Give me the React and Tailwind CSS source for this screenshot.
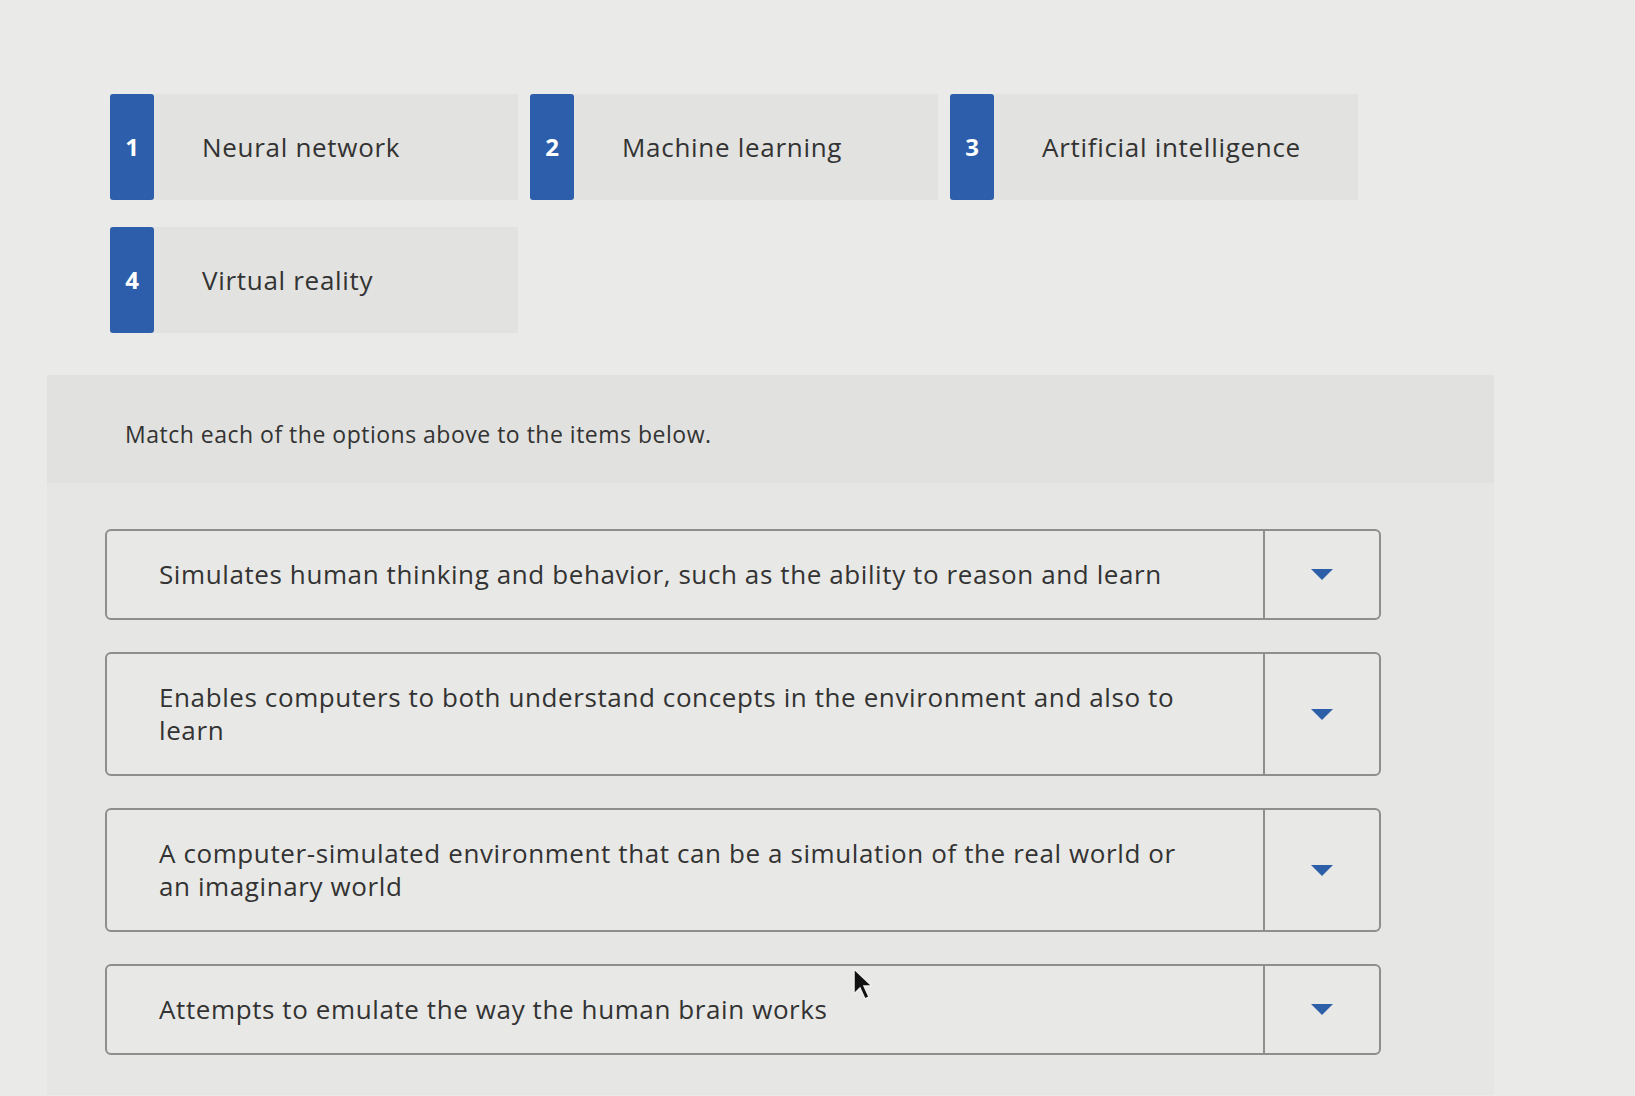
const options = [
  { n: 1, label: "Neural network" },
  { n: 2, label: "Machine learning" },
  { n: 3, label: "Artificial intelligence" },
  { n: 4, label: "Virtual reality" },
]

const items = [
  "Simulates human thinking and behavior, such as the ability to reason and learn",
  "Enables computers to both understand concepts in the environment and also to learn",
  "A computer-simulated environment that can be a simulation of the real world or an imaginary world",
  "Attempts to emulate the way the human brain works",
]

const OptionCard = ({ n, label }) => (
  <div className="flex flex-row w-[408px] h-[106px] bg-[#e2e2e0]">
    <div className="w-[44px] h-full shrink-0 rounded-[3px] bg-[#2c5eab] flex items-center justify-center text-white text-[24px] font-bold">
      {n}
    </div>
    <div className="flex items-center pl-[48px] text-[26px] tracking-[0.7px] text-[#333]">{label}</div>
  </div>
)

const Caret = () => (
  <svg width="22" height="11" viewBox="0 0 22 11">
    <path d="M0 0 L22 0 L11 11 Z" fill="#2d5ea8" />
  </svg>
)

const MatchRow = ({ text }) => (
  <div className="flex flex-row w-[1276px] rounded-[6px] border-2 border-[#8e8e8c] bg-[#e8e8e6]">
    <div className="flex-1 pl-[52px] pr-[70px] py-[27px] text-[26px] tracking-[0.6px] leading-[33px] text-[#333]">{text}</div>
    <div className="w-[116px] shrink-0 border-l-2 border-[#8e8e8c] flex items-center justify-center">
      <Caret />
    </div>
  </div>
)

const Cursor = () => (
  <svg className="absolute left-[853px] top-[968px]" width="22" height="34" viewBox="0 0 22 34">
    <path d="M1 1 L1 26 L7 20 L12 31 L16 29 L11 18 L19 18 Z" fill="#111" stroke="#eee" strokeWidth="1.5" />
  </svg>
)

export default function App() {
  return (
    <div className="relative w-[1635px] h-[1096px] overflow-hidden bg-[#eaeae8] font-['Open_Sans','Liberation_Sans',sans-serif]">
      <div className="flex flex-row flex-wrap w-[1400px] gap-x-[12px] gap-y-[27px] pl-[110px] pt-[94px]">
        {options.map((o) => (
          <OptionCard key={o.n} {...o} />
        ))}
      </div>

      <div className="ml-[47px] mt-[42px] w-[1447px] h-[720px] bg-[#e6e6e4]">
        <div className="h-[108px] bg-[#e1e1df] pl-[78px] pt-[42px] text-[23px] tracking-[0.5px] text-[#333]">
          Match each of the options above to the items below.
        </div>
        <div className="flex flex-col gap-[32px] pl-[58px] pt-[46px]">
          {items.map((t) => (
            <MatchRow key={t} text={t} />
          ))}
        </div>
      </div>

      <Cursor />
    </div>
  )
}
